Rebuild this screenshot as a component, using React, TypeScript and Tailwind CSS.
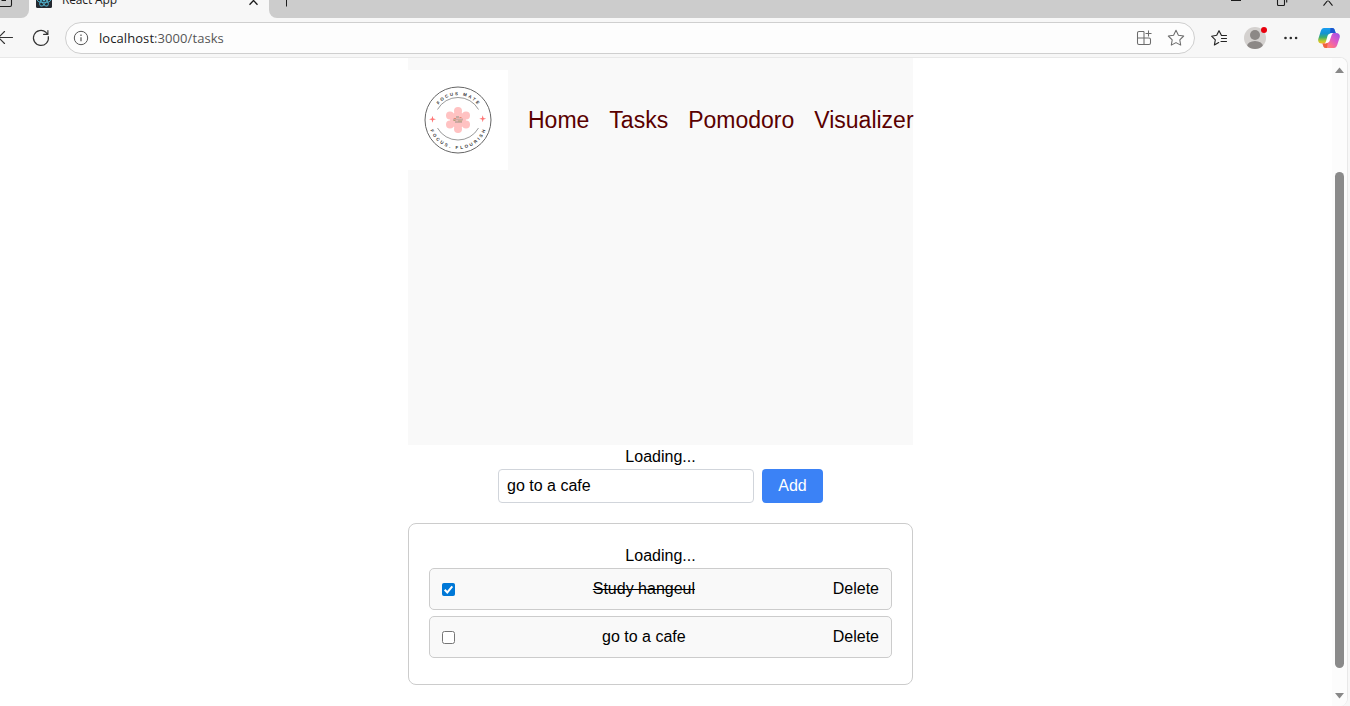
import type { ReactNode } from 'react'

function Logo() {
  return (
    <svg viewBox="0 0 100 100" className="block h-[100px] w-[100px] shrink-0 bg-white">
      <circle cx="50" cy="50" r="33" fill="none" stroke="#666" strokeWidth="1" />
      <path d="M29.5 39.5A23.5 23.5 0 0 1 70.5 39.5M29.5 58A23.5 23.5 0 0 0 70.5 58" fill="none" stroke="#777" strokeWidth="0.75" />
      <path id="arc-top" d="M25.2 50A24.8 24.8 0 0 1 74.8 50" fill="none" />
      <path id="arc-bottom" d="M20.5 47A29.6 29.6 0 1 0 79.5 47" fill="none" />
      <g fontFamily="'Liberation Sans', Arial, sans-serif" fontSize="4.4" fontWeight="700" fill="#333" textAnchor="middle">
        <text letterSpacing="1.75">
          <textPath href="#arc-top" startOffset="51%">FOCUS MATE</textPath>
        </text>
        <text letterSpacing="2.15">
          <textPath href="#arc-bottom" startOffset="51%">FOCUS. FLOURISH</textPath>
        </text>
      </g>
      <g fill="#ffc2c2">
        <circle cx="50" cy="41" r="4" />
        <circle cx="58" cy="45.5" r="4" />
        <circle cx="58" cy="54.5" r="4" />
        <circle cx="50" cy="59" r="4" />
        <circle cx="42" cy="54.5" r="4" />
        <circle cx="42" cy="45.5" r="4" />
        <circle cx="50" cy="50" r="8" />
      </g>
      <g strokeWidth="1.1" fill="none">
        <path d="M45 49.5h10M47 52h7" stroke="#cdaaa4" strokeWidth="2" />
        <path d="M48 47h3" stroke="#8f9486" />
        <path d="M46 48.5h2M51.5 47.5h2" stroke="#e88773" />
        <path d="M45.5 50.5h2M50 51h4" stroke="#b5a078" />
      </g>
      <path d="M24.5 45.8l.8 2.7 2.7.8-2.7.8-.8 2.7-.8-2.7-2.7-.8 2.7-.8zM74.7 45.2l.8 2.7 2.7.8-2.7.8-.8 2.7-.8-2.7-2.7-.8 2.7-.8z" fill="#ff7777" />
    </svg>
  )
}

function TabStrip() {
  return (
    <div className="flex h-[18px] overflow-hidden bg-[#cccccc]">
      <div className="w-[29px] shrink-0 bg-[#f7f7f7]">
        <div className="h-[18px] rounded-br-[8px] bg-[#cccccc]">
          <svg width="29" height="18" fill="none" stroke="#1b1b1b" strokeWidth="1.1">
            <path d="M0 6.500h10a1.500 1.500 0 0 0 1.500-1.500V0M1.500 .4H6" />
          </svg>
        </div>
      </div>
      <div className="flex w-[240px] shrink-0 bg-[#f7f7f7]">
        <svg width="16" height="18" className="ml-[7px] shrink-0" fill="none">
          <path d="M0 0h16v6.500a1.500 1.500 0 0 1-1.500 1.500h-13A1.500 1.500 0 0 1 0 6.500z" fill="#242930" />
          <g stroke="#52b9d5" strokeWidth=".9">
            <ellipse cx="8" cy="0" rx="6.700" ry="2.700" />
            <ellipse cx="8" cy="0" rx="6.700" ry="2.700" transform="rotate(60 8 0)" />
            <ellipse cx="8" cy="0" rx="6.700" ry="2.700" transform="rotate(120 8 0)" />
          </g>
          <circle cx="8" cy="0" r="1.400" fill="#52b9d5" />
        </svg>
        <span className="-mt-[9px] ml-[10px] whitespace-nowrap font-['Open_Sans','Noto_Sans',sans-serif] text-[12px] leading-[18px] tracking-[-0.15px] text-[#1b1b1b]">React App</span>
        <svg width="10" height="10" className="ml-auto mr-[11px]" stroke="#1b1b1b" strokeWidth="1.3">
          <path d="M5.500 0.500L9.500 4.700M5.500 0.500L1.500 4.700M5.500 0.500L4.500-.5M5.500 0.500l1-1" />
        </svg>
      </div>
      <div className="flex-1 bg-[#f7f7f7]">
        <div className="flex h-[18px] rounded-bl-[8px] bg-[#cccccc]">
          <svg width="30" height="18" stroke="#1b1b1b"><path d="M17.500 0v6.500" /></svg>
          <svg width="119" height="18" className="ml-auto" fill="none" stroke="#1b1b1b" strokeWidth="1.1">
            <path d="M0 .5h10M46.500-1v5.500a1 1 0 0 0 1 1h5a1 1 0 0 0 1-1V-1M55.700-1v3.500M97.500-.5L92.500 5.700M96.500-.5l5 6.200" />
          </svg>
        </div>
      </div>
    </div>
  )
}

function StarIcon({ list = false }: { list?: boolean }) {
  return list ? (
    <svg width="18" height="18" viewBox="0 0 18 18" fill="none" stroke="#242424" strokeWidth="1.15" strokeLinejoin="round" strokeLinecap="round">
      <path d="M16.500 6.500h-5L9 1.700 6.700 6.300 1.600 7.200l3.700 3.600-.9 5.200 4.300-2.500M11.500 9.500h5M11 12.500h5.500" />
    </svg>
  ) : (
    <svg width="18" height="18" viewBox="0 0 18 18" fill="none" stroke="#6c6c6c" strokeWidth="1.05" strokeLinejoin="round">
      <path d="M9 1.300l2.400 4.900 5.300.8-3.900 3.800.9 5.300L9 13.600l-4.700 2.500.9-5.300L1.300 7l5.300-.8z" />
    </svg>
  )
}

function CopilotIcon() {
  return (
    <svg width="22" height="20" viewBox="0 0 22 20" className="block">
      <defs>
        <linearGradient id="cp-left" x1="0" y1="0" x2="0" y2="1">
          <stop stopColor="#189df2" /><stop offset=".35" stopColor="#1494cf" /><stop offset=".6" stopColor="#3fae6c" /><stop offset=".85" stopColor="#c4ca2a" /><stop offset="1" stopColor="#f5b928" />
        </linearGradient>
        <linearGradient id="cp-right" x1="1" y1="0" x2="0" y2="1">
          <stop stopColor="#9a50e8" /><stop offset=".4" stopColor="#dc59c8" /><stop offset=".7" stopColor="#ff7386" /><stop offset="1" stopColor="#ffa05c" />
        </linearGradient>
      </defs>
      <path d="M6 0h8c2 0 2.500 1 3 3l.7 2h-3.500c-2 0-2.700 1-3.200 3l-1.700 5c-.6 1.800-1.500 2.500-3 2.500H3.700C1 15.500-.3 13.500.3 11L2.800 3C3.500 1 4.500 0 6 0z" fill="url(#cp-left)" />
      <path d="M12.500 0H14c2 0 2.500 1 3 3l.7 2h-3.500c-1 0-1.700.4-2.200 1z" fill="#1c55cf" />
      <path d="M16 20H8c-2 0-2.500-1-3-3l-.6-1.500h3c1.800 0 2.700-1 3.300-3l1.800-5c.6-1.800 1.500-2.500 3-2.500h2.800c2.700 0 4 2 3.400 4.500L19.200 17c-.7 2-1.700 3-3.200 3z" fill="url(#cp-right)" />
      <path d="M9 20H8c-2 0-2.500-1-3-3l-.6-1.500h3c1 0 1.800-.4 2.300-1z" fill="#f0623f" />
      <path d="M9.500 8c.6-1.800 1.800-2.800 5.500-3-.8.700-1.200 1.500-1.600 2.700l-1.600 4.800c-.6 1.700-1.800 2.700-5.100 2.900.7-.6 1-1.300 1.400-2.500z" fill="#fff" />
    </svg>
  )
}

function Toolbar() {
  return (
    <div className="flex h-[39px] items-center bg-[#f7f7f7]">
      <svg width="65" height="39" className="shrink-0" fill="none" stroke="#333" strokeWidth="1.15" strokeLinecap="round" strokeLinejoin="round">
        <path d="M12.500 19.500H-1M4.500 13.500l-6 6 6 6" />
        <path d="M48.300 18.500a7.500 7.500 0 1 1-2.400-4.200l1.700 1.700M47.900 12.500v3.900H43.600" />
      </svg>
      <div className="mt-px flex h-8 w-[1130px] shrink-0 items-center rounded-full border border-[#cfcfcf] bg-[#fdfdfd] pl-[7px] pr-[9px]">
        <svg width="16" height="16" className="shrink-0" fill="none" stroke="#555" strokeWidth="1">
          <circle cx="8" cy="8" r="6.700" />
          <path d="M8 7.200v4M8 4.600v1.300" strokeWidth="1.200" />
        </svg>
        <span className="ml-[10px] font-['Open_Sans','Noto_Sans',sans-serif] text-[13px] leading-[18px] tracking-[0.07px] text-[#555]"><span className="text-[#1b1b1b]">localhost</span>:3000/tasks</span>
        <svg width="16" height="16" className="ml-auto mr-[15px]" fill="none" stroke="#6c6c6c" strokeWidth="1.050">
          <path d="M8 1.500H3A1.500 1.500 0 0 0 1.500 3v10A1.500 1.500 0 0 0 3 14.500h10a1.500 1.500 0 0 0 1.500-1.500V9.500a1.500 1.500 0 0 0-1.500-1.500H1.500M8 1.500v13M12.500 .5v6M9.500 3.500h6" />
        </svg>
        <StarIcon />
      </div>
      <div className="ml-[15px]"><StarIcon list /></div>
      <div className="relative ml-[16px] mt-px h-[22px] w-[22px]">
        <svg width="22" height="22">
          <defs><clipPath id="avatar-clip"><circle cx="11" cy="11" r="11" /></clipPath></defs>
          <circle cx="11" cy="11" r="11" fill="#d4d1cf" />
          <g clipPath="url(#avatar-clip)" fill="#8c8886"><circle cx="11" cy="8" r="5" /><ellipse cx="11" cy="19.500" rx="8" ry="5.500" /></g>
        </svg>
        <span className="absolute left-[17px] top-0 h-[6px] w-[6px] rounded-full bg-[#e8000d]" />
      </div>
      <svg width="16" height="6" className="ml-[17px]" fill="#2b2b2b"><circle cx="2.500" cy="3" r="1.300" /><circle cx="7.800" cy="3" r="1.300" /><circle cx="13.100" cy="3" r="1.300" /></svg>
      <div className="ml-[19px] shrink-0"><CopilotIcon /></div>
    </div>
  )
}

function Task({ children, done = false }: { children: ReactNode; done?: boolean }) {
  return (
    <li className="flex h-[42px] items-center justify-between rounded-[5px] border border-[#cccccc] bg-[#f9f9f9] px-3 pb-px">
      <svg width="13" height="13" className="relative top-px">
        <rect x=".5" y=".5" width="12" height="12" rx={done ? 1 : 2} fill={done ? '#0078d7' : '#fff'} stroke={done ? '#0078d7' : '#767676'} />
        {done && <path d="M2.700 6.700l2.600 2.700 5-6" fill="none" stroke="#fff" strokeWidth="2" />}
      </svg>
      <span className={done ? 'line-through' : ''}>{children}</span>
      <button>Delete</button>
    </li>
  )
}

export default function App() {
  return (
    <div className="flex h-[706px] w-[1350px] flex-col overflow-hidden bg-[#f7f7f7]">
      <TabStrip />
      <Toolbar />
      <div className="flex h-[649px] w-[1348px] overflow-hidden rounded-r-[8px] border-r border-t border-[#e8e8e8] bg-white">
        <main className="flex w-[1332px] justify-center pr-[11px] font-['Liberation_Sans',Arial,sans-serif] text-base text-black">
          <div className="w-[505px]">
            <header className="h-[387px] bg-[#f9f9f9] pt-3">
              <nav className="flex items-center gap-5 whitespace-nowrap text-[23px] text-[#5a0000]">
                <Logo />
                <a>Home</a>
                <a>Tasks</a>
                <a>Pomodoro</a>
                <a>Visualizer</a>
              </nav>
            </header>
            <p className="text-center">Loading...</p>
            <form className="flex justify-center gap-2">
              <input defaultValue="go to a cafe" className="h-[34px] w-64 rounded-[4px] border border-[#d1d5db] px-2 pb-px outline-none" />
              <button type="button" className="h-[34px] w-[61px] rounded-[4px] bg-[#3b82f6] pb-px text-white">Add</button>
            </form>
            <section className="mt-5 h-[162px] rounded-[8px] border border-[#cccccc] px-5 pt-5">
              <p className="text-center">Loading...</p>
              <ul className="flex flex-col gap-1.5">
                <Task done>Study hangeul</Task>
                <Task>go to a cafe</Task>
              </ul>
            </section>
          </div>
        </main>
        <aside className="flex w-[15px] flex-col items-center bg-[#fcfcfc] pt-[9px]">
          <svg width="9" height="6" fill="#888"><path d="M0 6L4.500 .5 9 6z" /></svg>
          <div className="mt-[99px] h-[496px] w-[9px] rounded-full bg-[#8a8a8a]" />
          <svg width="9" height="6" fill="#888" className="mt-[25px]"><path d="M0 0L4.500 5.500 9 0z" /></svg>
        </aside>
      </div>
    </div>
  )
}
